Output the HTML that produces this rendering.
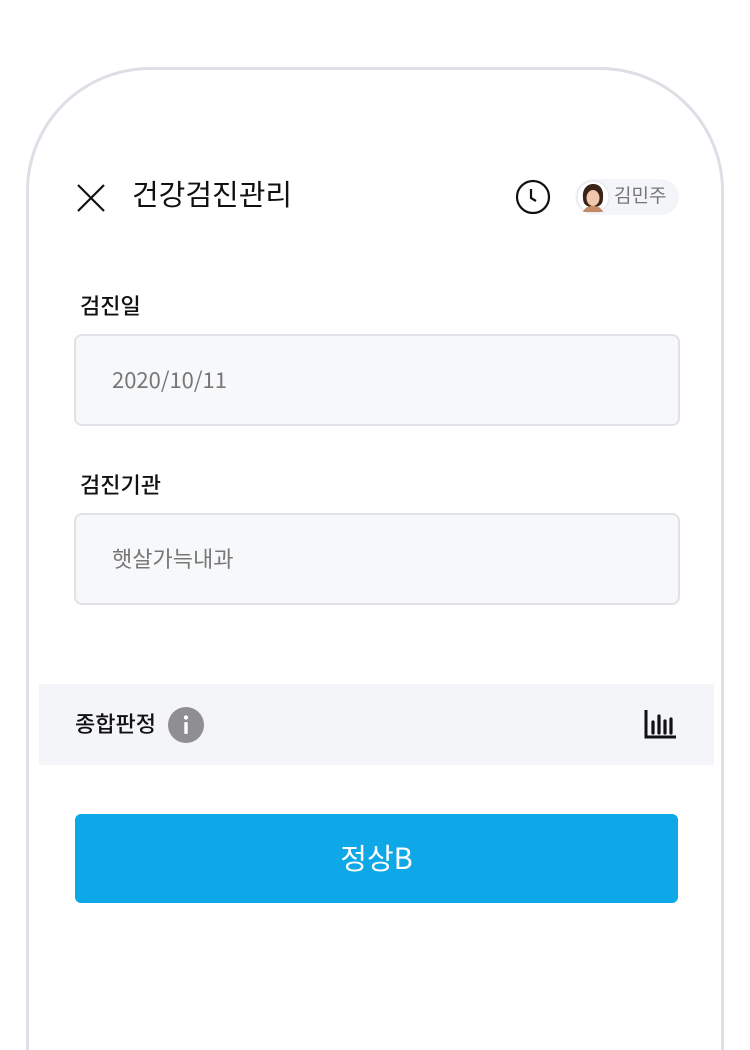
<!DOCTYPE html>
<html><head><meta charset="utf-8"><style>
*{margin:0;padding:0;box-sizing:border-box}
html,body{width:750px;height:1050px;overflow:hidden}
body{background:#fff;position:relative;font-family:"Noto Sans CJK KR","Liberation Sans",sans-serif}
.frame{position:absolute;left:26px;top:67px;width:698px;height:990px;border:3px solid #dfdee6;border-bottom:none;border-radius:124px 124px 0 0}
.abs{position:absolute}
.title{left:132px;top:172px;font-size:29px;color:#111;line-height:42px}
.label{font-size:22px;color:#111;font-weight:500;line-height:30px}
.input{left:74px;width:606px;height:92px;background:#f7f8fa;border:2px solid #e1e1e8;border-radius:8px;font-size:22px;color:#777;padding-left:36px;line-height:86px}
.band{left:39px;top:684px;width:675px;height:81px;background:#f4f5f8}
.btn{left:75px;top:814px;width:603px;height:89px;background:#0ea7e8;border-radius:6px;color:#fff;font-size:29px;text-align:center;line-height:86px}
.chip{left:575px;top:179px;width:104px;height:36px;background:#f4f5f8;border-radius:18px}
</style></head><body>
<div class="frame"></div>
<svg class="abs" style="left:76px;top:183px" width="30" height="30" viewBox="0 0 30 30"><path d="M2 2L28 28M28 2L2 28" stroke="#111" stroke-width="2.2"/></svg>
<div class="abs title">건강검진관리</div>
<svg class="abs" style="left:515px;top:179px" width="36" height="36" viewBox="0 0 36 36"><circle cx="18" cy="18" r="16" fill="none" stroke="#111" stroke-width="2.2"/><path d="M16 10V19L21 22" fill="none" stroke="#111" stroke-width="2.2"/></svg>
<div class="abs chip"></div>
<svg class="abs" style="left:576px;top:180px" width="34" height="34" viewBox="0 0 34 34"><circle cx="17" cy="17" r="16" fill="#fff" stroke="#e4e4ea"/><path d="M7 18C6 8 12 4 17 4C23 4 28 8 27 18C27 24 24 27 17 27C10 27 7 24 7 18Z" fill="#3a2218"/><ellipse cx="17" cy="18" rx="6.5" ry="8" fill="#f1c7ab"/><path d="M7 32C9 27 13 26 17 26C21 26 25 27 27 32Z" fill="#c48a66"/></svg>
<div class="abs" style="left:614px;top:181px;font-size:19px;color:#777;line-height:28px">김민주</div>
<div class="abs label" style="left:80px;top:290px">검진일</div>
<div class="abs input" style="top:334px">2020/10/11</div>
<div class="abs label" style="left:80px;top:469px">검진기관</div>
<div class="abs input" style="top:513px">햇살가늑내과</div>
<div class="abs band"></div>
<div class="abs label" style="left:75px;top:708px;font-size:22px">종합판정</div>
<svg class="abs" style="left:168px;top:707px" width="36" height="36" viewBox="0 0 36 36"><circle cx="18" cy="18" r="18" fill="#8e8e93"/><circle cx="18" cy="10.5" r="2.2" fill="#fff"/><rect x="16.3" y="15" width="3.4" height="12" rx="1" fill="#fff"/></svg>
<svg class="abs" style="left:644px;top:708px" width="34" height="32" viewBox="0 0 34 32"><path d="M2 2V29H32" fill="none" stroke="#111" stroke-width="3"/><path d="M9 14V25M15 8V25M21 13V25M27 11V25" stroke="#111" stroke-width="3.2" stroke-linecap="round"/></svg>
<div class="abs btn">정상B</div>
</body></html>
